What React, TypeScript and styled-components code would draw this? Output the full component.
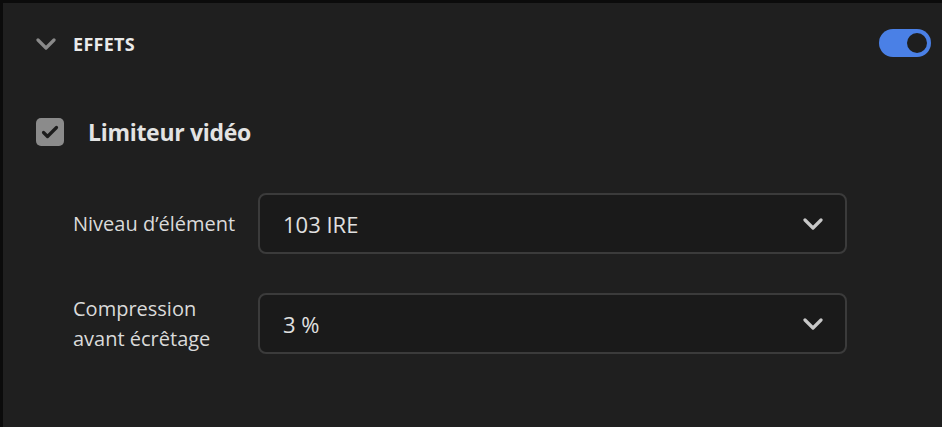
import styled, { createGlobalStyle } from 'styled-components';

const Global = createGlobalStyle`
  html, body { margin: 0; padding: 0; background: #0b0b0b; overflow: hidden; }
  body { font-family: "Open Sans", "Noto Sans", sans-serif; }
`;

const Panel = styled.div`
  box-sizing: border-box;
  width: 939px;
  height: 424px;
  margin-top: 3px;
  margin-left: 3px;
  background: #1f1f1f;
  color: #dcdcdc;
  padding: 0 11px 0 33px;
`;

const Header = styled.div`
  display: flex;
  align-items: center;
  height: 82px;
`;

const Title = styled.h2`
  margin: 0 0 0 17px;
  font-size: 18px;
  font-weight: 700;
  letter-spacing: 0.3px;
  color: #eaeaea;
  flex: 1;
`;

const Toggle = styled.div<{ $on: boolean }>`
  width: 52px;
  height: 28px;
  border-radius: 14px;
  background: ${(p) => (p.$on ? '#4a80e6' : '#555')};
  display: flex;
  align-items: center;
  justify-content: ${(p) => (p.$on ? 'flex-end' : 'flex-start')};
  padding: 0 4px;
  box-sizing: border-box;
  margin-top: -2px;
`;

const Knob = styled.div`
  width: 20px;
  height: 20px;
  border-radius: 50%;
  background: #1e1e1e;
`;

const CheckRow = styled.label`
  display: flex;
  align-items: flex-start;
  gap: 24px;
  height: 108px;
  padding-top: 33px;
  box-sizing: border-box;
`;

const Box = styled.span`
  width: 28px;
  height: 28px;
  border-radius: 5px;
  background: #8b8b8b;
  display: flex;
  align-items: center;
  justify-content: center;
`;

const CheckLabel = styled.span`
  font-size: 23px;
  font-weight: 700;
  letter-spacing: -0.3px;
  color: #e3e3e3;
  line-height: 28px;
`;

const Row = styled.div`
  display: grid;
  grid-template-columns: 185px 589px;
  align-items: center;
  padding-left: 37px;
  margin-bottom: 39px;
`;

const Label = styled.div`
  font-size: 20px;
  line-height: 30px;
  color: #dadada;
`;

const Select = styled.div`
  box-sizing: border-box;
  height: 61px;
  border: 2px solid #3b3b3b;
  border-radius: 8px;
  background: #1a1a1a;
  display: flex;
  align-items: center;
  justify-content: space-between;
  padding: 0 22px 0 23px;
  font-size: 22px;
  color: #e0e0e0;
`;

const Chevron = ({ color, size }: { color: string; size: number }) => (
  <svg width={size} height={size * 0.6} viewBox="0 0 20 12" fill="none">
    <path d="M2 2l8 8 8-8" stroke={color} strokeWidth="3.2" strokeLinecap="round" strokeLinejoin="round" />
  </svg>
);

const fields = [
  { label: ['Niveau d’élément'], value: '103 IRE' },
  { label: ['Compression', 'avant écrêtage'], value: '3 %' },
];

export default function App() {
  return (
    <>
      <Global />
      <Panel>
        <Header>
          <Chevron color="#8a8a8a" size={20} />
          <Title>EFFETS</Title>
          <Toggle $on>
            <Knob />
          </Toggle>
        </Header>
        <CheckRow>
          <Box>
            <svg width="18" height="14" viewBox="0 0 18 14" fill="none">
              <path d="M2.5 7.5l4 4 9-9" stroke="#1c1c1c" strokeWidth="3.2" strokeLinecap="round" strokeLinejoin="round" />
            </svg>
          </Box>
          <CheckLabel>Limiteur vidéo</CheckLabel>
        </CheckRow>
        {fields.map((f) => (
          <Row key={f.value}>
            <Label>
              {f.label.map((l) => (
                <div key={l}>{l}</div>
              ))}
            </Label>
            <Select>
              <span>{f.value}</span>
              <Chevron color="#c8c8c8" size={20} />
            </Select>
          </Row>
        ))}
      </Panel>
    </>
  );
}
